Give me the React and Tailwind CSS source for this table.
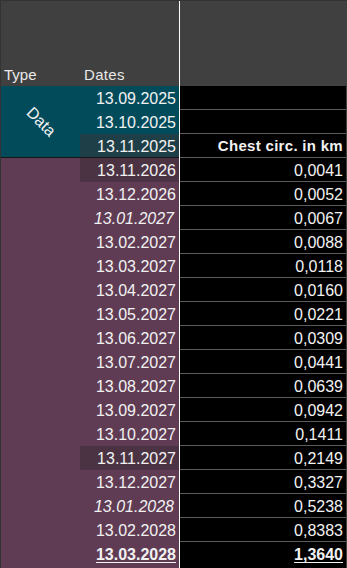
import React from 'react';

const rows = [
  { d: '13.11.2026', v: '0,0041', hl: true },
  { d: '13.12.2026', v: '0,0052' },
  { d: '13.01.2027', v: '0,0067', it: true },
  { d: '13.02.2027', v: '0,0088' },
  { d: '13.03.2027', v: '0,0118' },
  { d: '13.04.2027', v: '0,0160' },
  { d: '13.05.2027', v: '0,0221' },
  { d: '13.06.2027', v: '0,0309' },
  { d: '13.07.2027', v: '0,0441' },
  { d: '13.08.2027', v: '0,0639' },
  { d: '13.09.2027', v: '0,0942' },
  { d: '13.10.2027', v: '0,1411' },
  { d: '13.11.2027', v: '0,2149', hl: true },
  { d: '13.12.2027', v: '0,3327' },
  { d: '13.01.2028', v: '0,5238', it: true },
  { d: '13.02.2028', v: '0,8383' },
  { d: '13.03.2028', v: '1,3640', last: true },
];

function DateCell({ d, hl, it, last, dark }) {
  return (
    <div
      className={`h-6 ml-[79px] flex items-center justify-end pt-[2px] text-[16px] ${it ? 'italic pr-[5px]' : 'pr-[3px]'} ${last ? 'font-bold underline underline-offset-2' : ''} ${hl ? dark : ''}`}
    >
      {d}
    </div>
  );
}

export default function App() {
  return (
    <div
      className="w-[347px] h-[568px] overflow-hidden bg-[#404040] flex text-[15px] text-[#f2f2f2] border-t border-l border-[#333333]"
      style={{ fontFamily: '"Liberation Sans", Arial, sans-serif' }}
    >
      {/* left: type + dates */}
      <div className="w-[178px] flex flex-col">
        <div className="h-[61px]" />
        <div className="h-6 flex items-center pt-[2px] text-[#e8e8e8]">
          <span className="w-20 pl-[3px]">Type</span>
          <span className="pl-[3px] tracking-[0.3px]">Dates</span>
        </div>
        <div className="relative bg-[#024b5b] border-b border-[#161616]">
          <div className="absolute left-0 top-0 w-[79px] h-full flex items-center justify-center">
            <span className="rotate-45 text-[16px]">Data</span>
          </div>
          <DateCell d="13.09.2025" />
          <DateCell d="13.10.2025" />
          <div className="h-[23px] ml-[79px] bg-[#1e3f47] flex items-center justify-end pt-[2px] pr-[3px] text-[16px]">
            13.11.2025
          </div>
        </div>
        <div className="flex-1 bg-[#603c54]">
          {rows.map((r) => (
            <DateCell key={r.d} {...r} dark="bg-[#4b3344]" />
          ))}
        </div>
      </div>

      <div className="w-px bg-white" />

      {/* right: values */}
      <div className="w-[166px] flex flex-col">
        <div className="h-[85px]" />
        <div className="bg-black flex-1 text-[16px]">
          <div className="h-6 border-b border-[#5a5a5a]" />
          <div className="h-6 border-b border-[#5a5a5a]" />
          <div className="h-6 border-b border-[#5a5a5a] flex items-center justify-end pt-[2px] pr-[3px] font-bold text-[15px] tracking-[0.3px]">
            Chest circ. in km
          </div>
          {rows.map((r) => (
            <div
              key={r.d}
              className={`h-6 flex items-center justify-end pt-[2px] pr-[3px] ${r.last ? 'font-bold' : 'border-b border-[#5a5a5a]'}`}
            >
              <span className={r.last ? 'underline underline-offset-2' : ''}>{r.v}</span>
            </div>
          ))}
        </div>
      </div>
    </div>
  );
}
